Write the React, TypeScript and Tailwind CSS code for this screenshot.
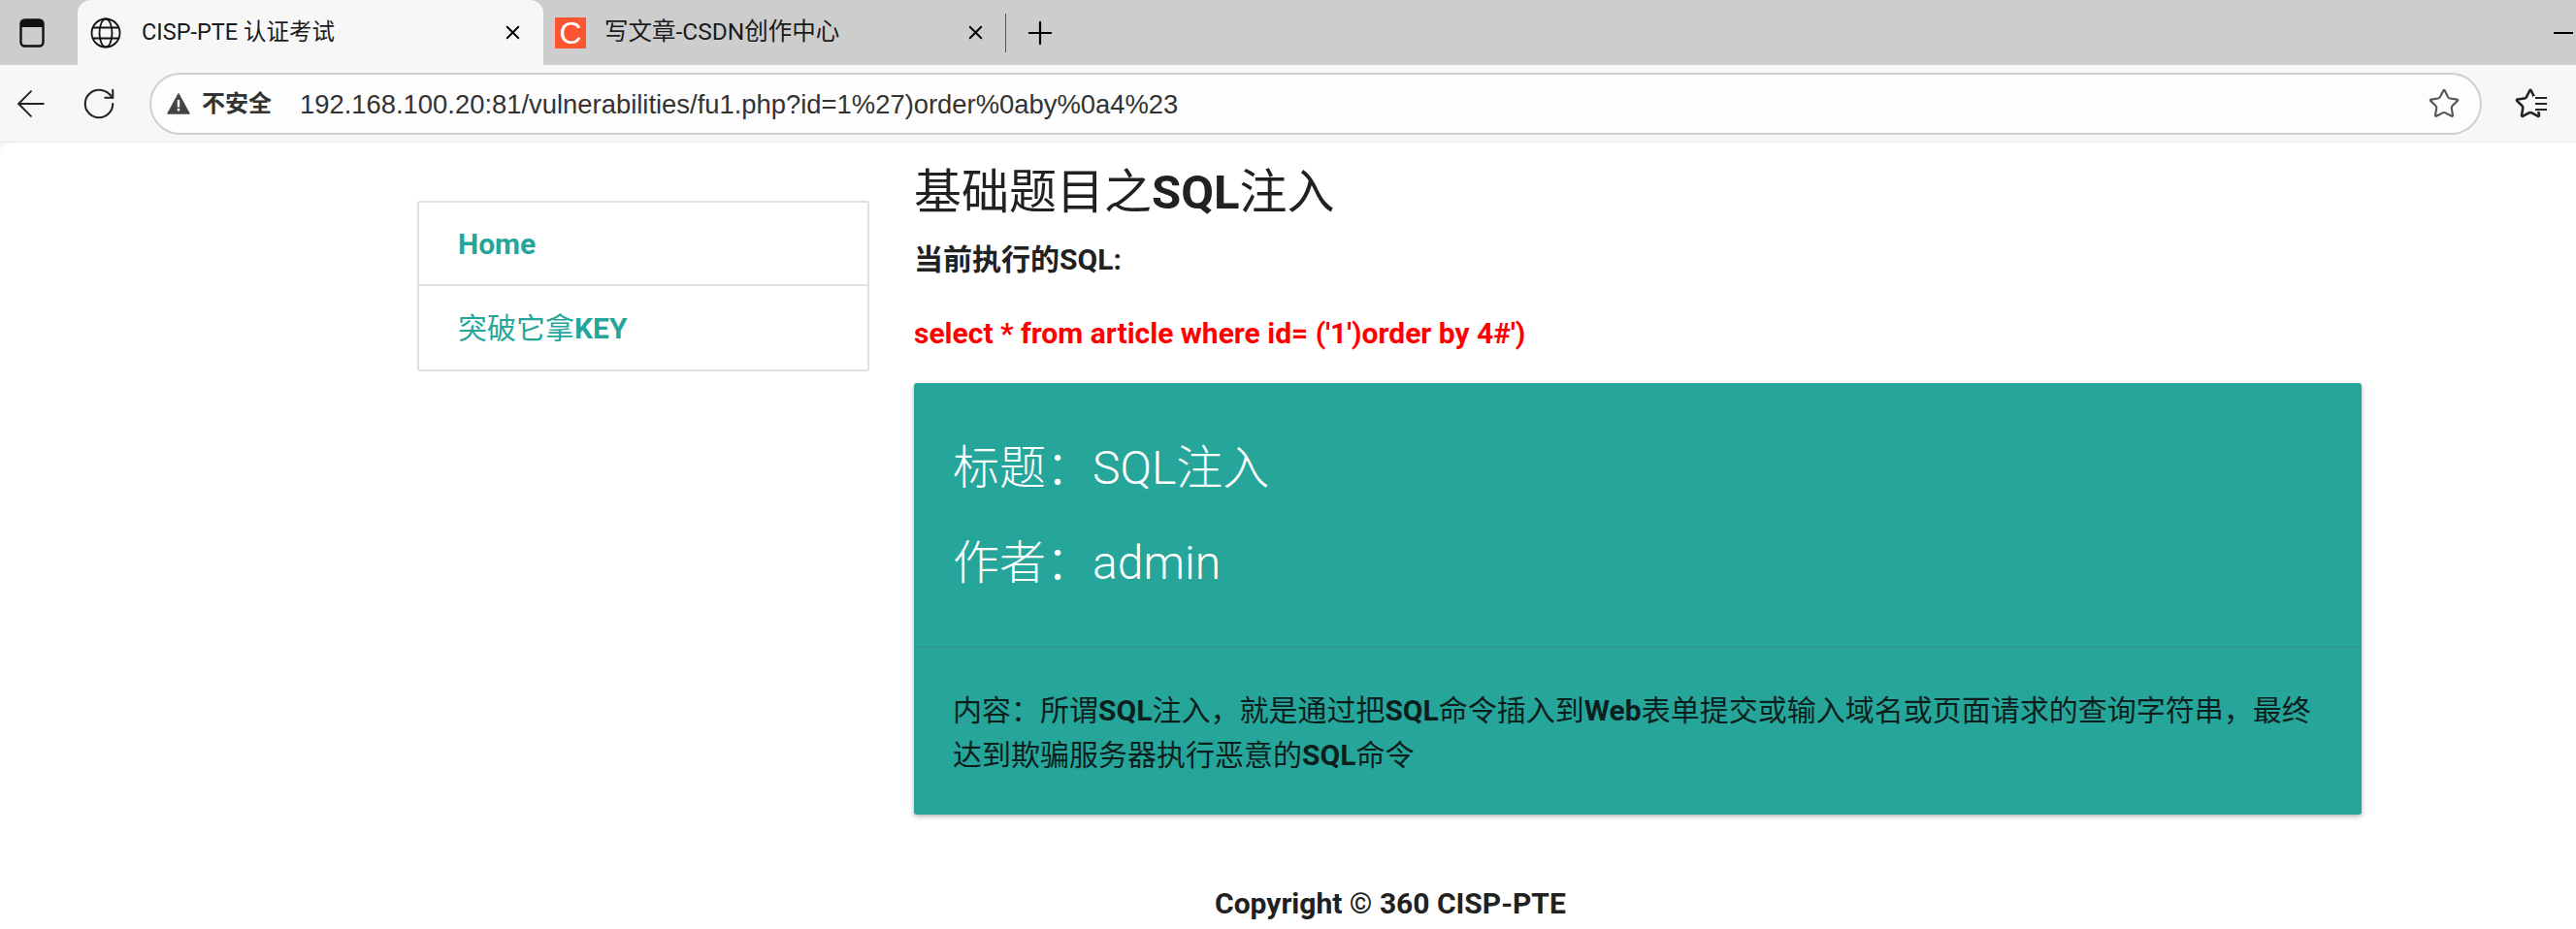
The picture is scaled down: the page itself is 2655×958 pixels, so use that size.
import { RotateCw, ArrowLeft, Star, X, Plus } from "lucide-react";

const cjk = "font-['Roboto','Noto_Sans_CJK_SC',sans-serif]";

function Tab({ active, icon, title }: { active?: boolean; icon: React.ReactNode; title: string }) {
  return (
    <div className={`flex h-[67px] shrink-0 items-center rounded-t-[14px] ${active ? "w-[480px] bg-[#f7f7f7] pl-[13px] pr-[20px]" : "w-[476px] pl-[12px] pr-[19px]"}`}>
      <div className="flex w-[32px] justify-center">{icon}</div>
      <span className={`flex-1 truncate ${cjk} text-[#1a1a1a] ${active ? "ml-[21px] text-[23.5px]" : "ml-[19px] text-[24.5px]"}`}>{title}</span>
      <X size={23} strokeWidth={2} className="text-black" />
    </div>
  );
}

function Browser() {
  return (
    <div className="shrink-0">
      <div className="flex h-[67px] items-center bg-[#cdcdcd]">
        <div className="flex w-[80px] shrink-0 justify-center pr-[14px]">
          <svg width="26" height="30" viewBox="0 0 26 30" fill="none">
            <rect x="1.5" y="1.5" width="23" height="27" rx="4" stroke="#111" strokeWidth="2.4" />
            <path d="M2 6a4 4 0 0 1 4-4h14a4 4 0 0 1 4 4v3H2z" fill="#111" />
          </svg>
        </div>
        <Tab
          active
          title="CISP-PTE 认证考试"
          icon={
            <svg width="32" height="32" viewBox="0 0 32 32" fill="none" stroke="#111" strokeWidth="1.8">
              <circle cx="16" cy="16" r="14.5" />
              <ellipse cx="16" cy="16" rx="6.5" ry="14.5" />
              <path d="M3 10.5h26M3 21.5h26" />
            </svg>
          }
        />
        <Tab
          title="写文章-CSDN创作中心"
          icon={
            <div className="flex h-[32px] w-[32px] items-center justify-center bg-[#fc5531] font-['Liberation_Sans',sans-serif] text-[32px] leading-none text-white">
              C
            </div>
          }
        />
        <div className="h-[40px] w-px bg-[#555]" />
        <Plus size={38} strokeWidth={1.4} className="ml-[16px] text-black" />
        <div className="flex-1" />
        <div className="mr-[3px] h-[2px] w-[20px] bg-black" />
      </div>
      <div className="flex h-[80px] items-center border-b border-[#e8e8e8] bg-[#f7f7f7]">
        <ArrowLeft size={44} strokeWidth={1} className="ml-[10px] text-[#222]" />
        <RotateCw size={38} strokeWidth={1.3} className="ml-[29px] text-[#222]" />
        <div className="ml-[33px] flex h-[64px] w-[2404px] items-center rounded-full border-2 border-[#cfcfcf] bg-[#fdfdfd] pl-[16px] pr-[20px]">
          <svg width="24" height="22" viewBox="0 0 24 22">
            <path d="M12 1 L23 21 H1 Z" fill="#444" stroke="#444" strokeWidth="1.5" strokeLinejoin="round" />
            <rect x="10.8" y="7" width="2.4" height="7.5" fill="#fff" />
            <rect x="10.8" y="16" width="2.4" height="2.4" fill="#fff" />
          </svg>
          <span className={`ml-[12px] ${cjk} text-[24px] font-bold text-[#333]`}>不安全</span>
          <span className="ml-[29px] flex-1 pt-[2px] font-['Liberation_Sans',sans-serif] text-[27.4px] text-[#333]">
            192.168.100.20:81/vulnerabilities/fu1.php?id=1%27)order%0aby%0a4%23
          </span>
          <Star size={34} strokeWidth={1.5} className="text-[#555]" />
        </div>
        <div className="relative ml-[33px] h-[34px] w-[34px]">
          <Star size={34} strokeWidth={1.8} className="text-[#222]" />
          <div className="absolute right-0 top-[9px] flex w-[14px] flex-col gap-[4px] bg-[#f7f7f7] py-[1px] pl-[2px]">
            <div className="h-[2px] bg-[#222]" />
            <div className="h-[2px] bg-[#222]" />
            <div className="h-[2px] bg-[#222]" />
          </div>
        </div>
      </div>
    </div>
  );
}

export default function App() {
  return (
    <div className={`flex h-[958px] w-[2655px] flex-col overflow-hidden bg-[#f7f7f7] ${cjk} text-[#212121]`}>
      <Browser />
      <div className="flex flex-1 flex-col rounded-tl-[12px] bg-white">
        <div className="flex pl-[430px]">
          <div className="mt-[60px] h-[176px] w-[466px] shrink-0 rounded-[3px] border-2 border-[#e0e0e0]">
            <div className="flex h-[86px] items-center border-b-2 border-[#e0e0e0] pl-[40px] text-[30px] font-bold text-[#26a69a]">Home</div>
            <div className="flex h-[86px] items-center pl-[40px] text-[30px] text-[#26a69a]">
              突破它拿<b className="font-bold">KEY</b>
            </div>
          </div>
          <div className="ml-[46px] w-[1492px]">
            <h1 className="mt-[20px] text-[49px] leading-[64px]">
              基础题目之<b className="font-bold">SQL</b>注入
            </h1>
            <p className="mt-[17px] text-[30px] leading-[40px] font-bold">当前执行的SQL:</p>
            <p className="mt-[36px] text-[30px] leading-[40px] font-bold text-[#ff0000]">
              select * from article where id= ('1')order by 4#')
            </p>
            <div className="mt-[31px] h-[445px] rounded-[3px] bg-[#26a69a] shadow-[0_2px_5px_rgba(0,0,0,0.3)]">
              <div className="h-[273px] border-b-2 border-[#2d9a8f] px-[40px] pt-[56px] text-[48px] leading-[64px] font-light text-white">
                <p>标题：SQL注入</p>
                <p className="mt-[34px]">作者：admin</p>
              </div>
              <div className="px-[40px] pt-[42px] text-[30px] leading-[46px] text-[#0d1f1d]">
                内容：所谓<b>SQL</b>注入，就是通过把<b>SQL</b>命令插入到<b>Web</b>表单提交或输入域名或页面请求的查询字符串，最终达到欺骗服务器执行恶意的<b>SQL</b>命令
              </div>
            </div>
          </div>
        </div>
        <div className="mt-[72px] pl-[1252px] text-[30px] leading-[40px] font-bold">Copyright © 360 CISP-PTE</div>
      </div>
    </div>
  );
}
